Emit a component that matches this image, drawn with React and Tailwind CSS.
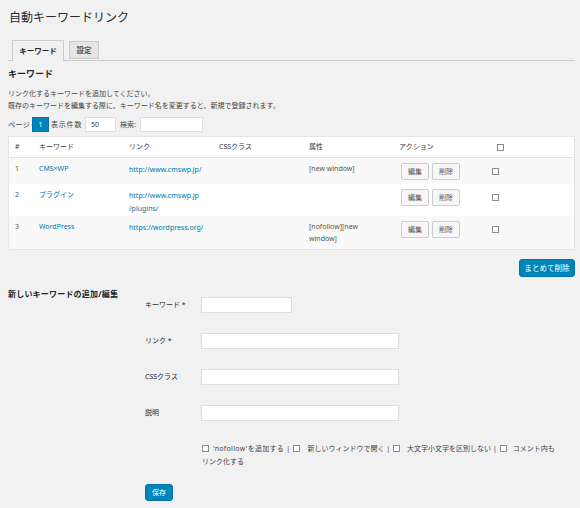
import React from 'react';

const Box = ({ className = '' }) => (
  <span className={`inline-block w-[7px] h-[7px] border border-[#8c8c8c] bg-white shrink-0 ${className}`}></span>
);

const rows = [
  { id: 1, keyword: 'CMS×WP', link: ['http://www.cmswp.jp/'], attr: ['[new window]'], h: 'h-[26px]', bg: 'bg-[#f9f9f9]' },
  { id: 2, keyword: 'プラグイン', link: ['http://www.cmswp.jp', '/plugins/'], attr: [], h: 'h-[32px]', bg: 'bg-white' },
  { id: 3, keyword: 'WordPress', link: ['https://wordpress.org/'], attr: ['[nofollow][new', 'window]'], h: 'h-[33px]', bg: 'bg-[#f9f9f9]' },
];

const cols = 'grid grid-cols-[24px_90px_90px_90px_90px_96px_1fr]';

const App = () => {
  return (
    <div className="min-h-screen bg-[#f1f1f1] font-['Noto_Sans','Noto_Sans_CJK_JP',sans-serif] text-[7px] leading-[12px] text-[#444] pl-2 pr-[5px]">
      {/* Title */}
      <h1 className="pt-[10px] text-[12px] leading-[16px] text-[#23282d] pl-px">自動キーワードリンク</h1>

      {/* Tabs */}
      <div className="mt-[14px] h-[21px] border-b border-[#ccc] flex items-end gap-[5px] pl-[4px]">
        <div className="w-[52px] h-[21px] -mb-px border border-b-0 border-[#ccc] bg-[#f1f1f1] flex items-center justify-center text-[7.5px] font-bold text-[#23282d]">
          キーワード
        </div>
        <div className="w-[30px] h-[18px] mb-px border border-[#ccc] bg-[#e5e5e5] flex items-center justify-center text-[7.5px] font-bold text-[#555]">
          設定
        </div>
      </div>

      {/* Section heading */}
      <h2 className="mt-[7px] text-[9px] leading-[12px] font-bold text-[#23282d]">キーワード</h2>
      <p className="mt-[8px]">
        リンク化するキーワードを追加してください。<br />
        既存のキーワードを編集する際に、キーワード名を変更すると、新規で登録されます。
      </p>

      {/* Pager / search */}
      <div className="mt-[5px] flex items-center h-[15px]">
        <span className="w-[24px] tracking-[0.5px]">ページ</span>
        <span className="w-[17px] h-[15px] bg-[#0085ba] border border-[#0073aa] text-white flex items-center justify-center">1</span>
        <span className="ml-[2px] w-[34px] tracking-[0.8px]">表示件数</span>
        <div className="w-[31px] h-[15px] bg-white border border-[#ddd] pl-[5px] flex items-center text-[#32373c]">50</div>
        <span className="ml-[4px] w-[20px]">検索:</span>
        <div className="w-[63px] h-[15px] bg-white border border-[#ddd]"></div>
      </div>

      {/* Table */}
      <div className="mt-[4px] border border-[#e5e5e5] bg-white">
        <div className={`${cols} h-[21px] items-center border-b border-[#e1e1e1] text-[#32373c]`}>
          <span className="pl-[6px]">#</span>
          <span className="pl-[6px]">キーワード</span>
          <span className="pl-[6px]">リンク</span>
          <span className="pl-[6px]">CSSクラス</span>
          <span className="pl-[6px]">属性</span>
          <span className="pl-[6px]">アクション</span>
          <span className="pl-[8px] flex"><Box /></span>
        </div>
        {rows.map((r) => (
          <div key={r.id} className={`${cols} ${r.h} ${r.bg} pt-[5px]`}>
            <span className="pl-[6px] text-[#555]">{r.id}</span>
            <span className="pl-[6px] text-[#0073aa]">{r.keyword}</span>
            <span className="pl-[6px] text-[#0073aa]">
              {r.link.map((l, i) => (
                <span key={i} className="block leading-[13px]">{l}</span>
              ))}
            </span>
            <span className="pl-[6px]"></span>
            <span className="pl-[6px] text-[#555]">
              {r.attr.map((a, i) => (
                <span key={i} className="block leading-[12px]">{a}</span>
              ))}
            </span>
            <span className="pl-[8px] flex gap-[3px] items-start">
              <span className="w-[28px] h-[17px] border border-[#ccc] bg-[#f7f7f7] rounded-[2px] flex items-center justify-center text-[#555]">編集</span>
              <span className="w-[28px] h-[17px] border border-[#ccc] bg-[#f7f7f7] rounded-[2px] flex items-center justify-center text-[#555]">削除</span>
            </span>
            <span className="pl-[3px] flex items-start pt-[5px]"><Box /></span>
          </div>
        ))}
      </div>

      {/* Bulk delete */}
      <div className="mt-[9px] flex justify-end">
        <span className="w-[56px] h-[18px] bg-[#0085ba] border border-[#0073aa] rounded-[3px] text-white text-[7.5px] flex items-center justify-center">まとめて削除</span>
      </div>

      {/* Add / edit form */}
      <div className="mt-[10px] flex">
        <div className="w-[137px] pt-[1px]">
          <h3 className="text-[8px] leading-[12px] font-bold text-[#23282d] tracking-[0.2px]">新しいキーワードの追加/編集</h3>
        </div>
        <div className="flex flex-col">
          {[
            { label: 'キーワード *', w: 'w-[91px]' },
            { label: 'リンク *', w: 'w-[198px]' },
            { label: 'CSSクラス', w: 'w-[198px]' },
            { label: '説明', w: 'w-[198px]' },
          ].map((f) => (
            <div key={f.label} className="h-[36px] flex items-center">
              <span className="w-[56px] text-[#23282d]">{f.label}</span>
              <div className={`${f.w} h-[16px] bg-white border border-[#ddd]`}></div>
            </div>
          ))}
        </div>
      </div>

      <div className="mt-[11px] pl-[194px] leading-[13px] text-[#444]">
        <div className="flex items-center">
          <Box className="mr-[4px]" />
          <span className="tracking-[0.3px]">'nofollow'を追加する |</span>
          <Box className="ml-[3px] mr-[7px]" />
          <span>新しいウィンドウで開く |</span>
          <Box className="ml-[3px] mr-[7px]" />
          <span>大文字小文字を区別しない |</span>
          <Box className="ml-[3px] mr-[6px]" />
          <span>コメント内も</span>
        </div>
        <div>リンク化する</div>
      </div>

      <div className="mt-[16px] pl-[137px] pb-2">
        <span className="w-[28px] h-[17px] bg-[#0085ba] border border-[#0073aa] rounded-[3px] text-white flex items-center justify-center">保存</span>
      </div>
    </div>
  );
};

export default App;
